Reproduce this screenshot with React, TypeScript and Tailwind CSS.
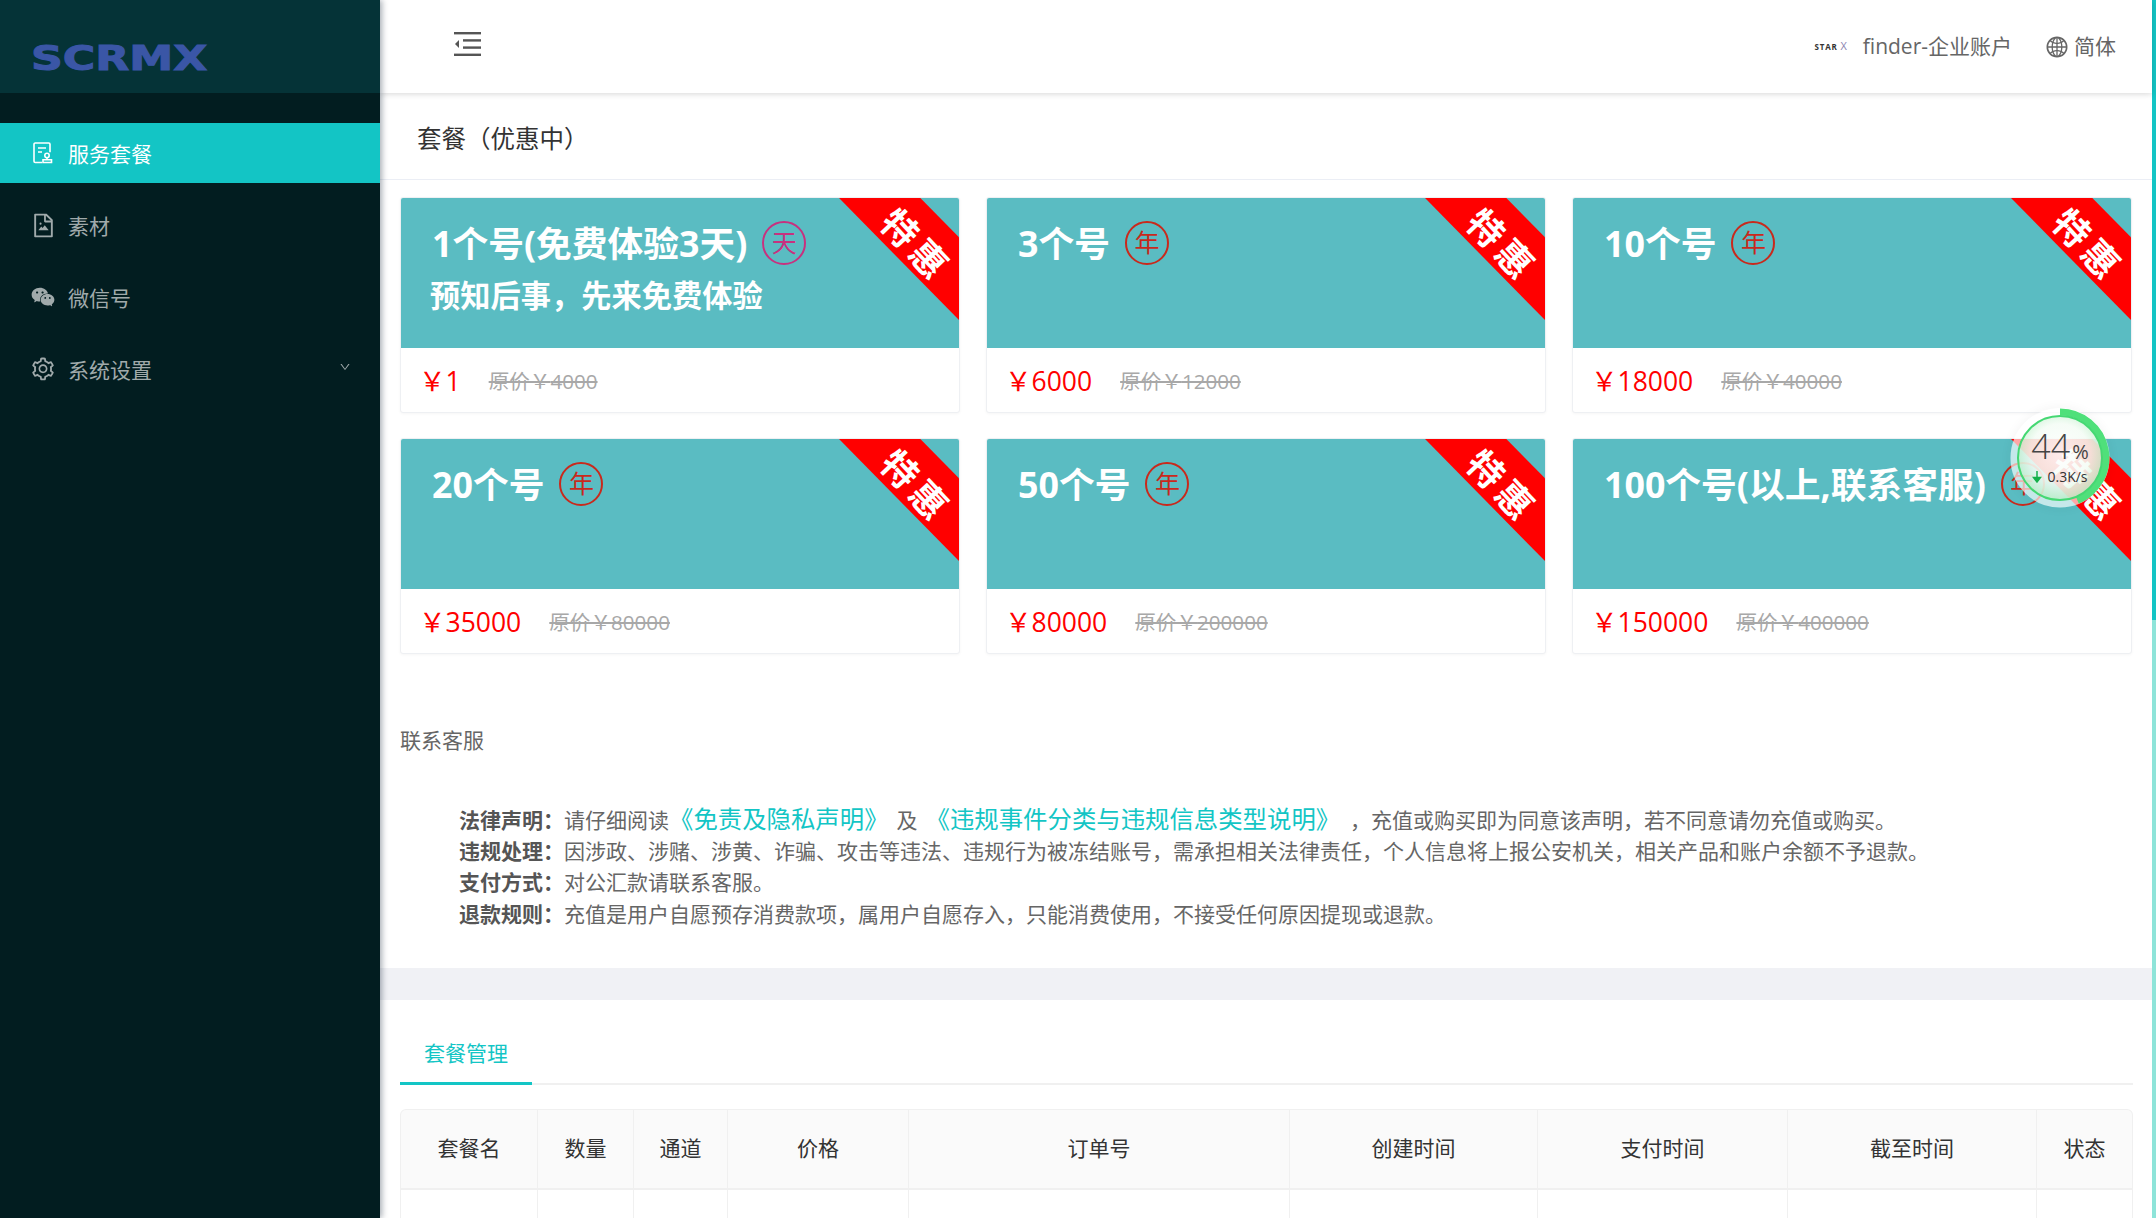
import { AiFillWechat, AiOutlineDown, AiOutlineFileImage, AiOutlineGlobal, AiOutlineSetting } from 'react-icons/ai';

const packages = [
  { title: '1个号(免费体验3天)', unit: '天', sub: '预知后事，先来免费体验', price: '1', old: '4000' },
  { title: '3个号', unit: '年', price: '6000', old: '12000' },
  { title: '10个号', unit: '年', price: '18000', old: '40000' },
  { title: '20个号', unit: '年', price: '35000', old: '80000' },
  { title: '50个号', unit: '年', price: '80000', old: '200000' },
  { title: '100个号(以上,联系客服)', unit: '年', price: '150000', old: '400000' },
];

const columns = [
  { name: '套餐名', width: 'w-[138px]' },
  { name: '数量', width: 'w-[96px]' },
  { name: '通道', width: 'w-[94px]' },
  { name: '价格', width: 'w-[181px]' },
  { name: '订单号', width: 'w-[381px]' },
  { name: '创建时间', width: 'w-[248px]' },
  { name: '支付时间', width: 'w-[250px]' },
  { name: '截至时间', width: 'w-[249px]' },
  { name: '状态', width: 'w-[96px]' },
];

const ServiceIcon = () => (
  <svg width="20" height="22" viewBox="0 0 20 22" fill="none" stroke="currentColor" strokeWidth="1.6">
    <path d="M9 20.5H2.2a1.2 1.2 0 0 1-1.2-1.2V2.2A1.2 1.2 0 0 1 2.2 1h13.6A1.2 1.2 0 0 1 17 2.2v8" />
    <path d="M5 6h8M5 10h4" />
    <circle cx="14" cy="13.5" r="2.2" />
    <path d="M14 15.7v2M10 20.5v-2.8h8.5v2.8z" />
  </svg>
);

const MenuItem = ({ icon, label, active, arrow }: { icon: React.ReactNode; label: string; active?: boolean; arrow?: boolean }) => (
  <div className={`mb-3 flex h-[60px] items-center pl-[33px] text-[21px] ${active ? 'bg-[#13c5c5] text-white' : 'text-[#a0aaab]'}`}>
    <span className="flex w-[20px] justify-center">{icon}</span>
    <span className="ml-[15px] pt-[3px]">{label}</span>
    {arrow && <AiOutlineDown className="ml-auto mr-[29px] mb-1" size={12} />}
  </div>
);

const PackageCard = ({ item }: { item: (typeof packages)[number] }) => (
  <div className="h-[216px] overflow-hidden rounded-[3px] border border-[#eef0f3] bg-white shadow-[0_1px_3px_rgba(0,0,0,0.04)]">
    <div className="relative h-[150px] overflow-hidden bg-[#5abcc2] pl-[31px] pt-[22px] text-white">
      <div className="flex items-center">
        <span className="text-[35.75px] font-bold leading-[46px] whitespace-nowrap">{item.title}</span>
        <span className={`ml-[15px] flex h-[44px] w-[44px] shrink-0 items-center justify-center rounded-full border-2 text-[25px] ${item.unit === '天' ? 'border-[#c8317f] text-[#c8317f]' : 'border-[#c9291c] text-[#c9291c]'}`}>
          {item.unit}
        </span>
      </div>
      {item.sub && <div className="mt-[10px] -ml-[2px] text-[30.25px] font-bold leading-[40px]">{item.sub}</div>}
      <div className="absolute -right-[60px] top-[11px] h-[58px] w-[200px] rotate-[45.5deg] bg-[#ff0000]" />
      <div className="absolute right-px top-[30px] w-[84px] rotate-[47deg] text-center text-[36px] font-bold leading-none tracking-[6px] whitespace-nowrap">特惠</div>
    </div>
    <div className="flex h-[64px] items-center pl-[18px] pt-[3px]">
      <span className="text-[26.5px] text-[#ff0000]">￥{item.price}</span>
      <span className="ml-[28px] text-[20.6px] text-[#a8a8a8] line-through">原价￥{item.old}</span>
    </div>
  </div>
);

const SpeedBall = () => (
  <div className="absolute right-[46px] top-[408px] h-[100px] w-[100px] rounded-full shadow-[0_0_12px_rgba(0,0,0,0.05)]">
    <svg width="100" height="100" viewBox="0 0 100 100" className="absolute inset-0">
      <defs>
        <radialGradient id="ballFill" cx="50%" cy="45%" r="55%">
          <stop offset="0%" stopColor="#ffffff" stopOpacity="0.92" />
          <stop offset="65%" stopColor="#f4fcf5" stopOpacity="0.88" />
          <stop offset="100%" stopColor="#c3f0cd" stopOpacity="0.92" />
        </radialGradient>
      </defs>
      <circle cx="50" cy="50" r="46" fill="none" stroke="#ffffff" strokeOpacity="0.65" strokeWidth="7" />
      <path d="M50 4 A46 46 0 0 1 67.5 92.5" fill="none" stroke="#4fe07a" strokeWidth="7" />
      <circle cx="50" cy="50" r="42" fill="url(#ballFill)" stroke="#45d873" strokeWidth="2" />
    </svg>
    <div className="absolute inset-0 flex flex-col items-center pt-[19px]">
      <div className="flex items-baseline leading-none text-[#444]">
        <span className="text-[34px] font-light leading-[38px]">44</span>
        <span className="ml-[2px] text-[20px]">%</span>
      </div>
      <div className="mt-[3px] flex items-center text-[14px] leading-[18px] text-[#333]">
        <svg width="10" height="12" viewBox="0 0 10 12" className="mr-[5px]">
          <path d="M5 0v7M1.5 6.5L5 11l3.5-4.5z" fill="#16b04a" stroke="#16b04a" strokeWidth="1.5" />
        </svg>
        0.3K/s
      </div>
    </div>
  </div>
);

export default function App() {
  return (
    <div className="relative flex h-screen w-full overflow-hidden bg-white font-['Open_Sans','Noto_Sans_CJK_SC',sans-serif]">
      <aside className="z-20 w-[380px] shrink-0 bg-[#021d20] shadow-[2px_0_6px_rgba(0,21,41,0.35)]">
        <div className="flex h-[93px] items-center overflow-hidden bg-[#053337] pl-[31px] pt-[22px]">
          <span className="origin-left scale-x-[1.3] font-['DejaVu_Sans',sans-serif] text-[34px] font-bold leading-none text-[#3a56a6] [-webkit-text-stroke:1px_#3a56a6]">
            SCRMX
          </span>
        </div>
        <nav className="pt-[30px]">
          <MenuItem active icon={<ServiceIcon />} label="服务套餐" />
          <MenuItem icon={<AiOutlineFileImage className="shrink-0" size={27} />} label="素材" />
          <MenuItem icon={<AiFillWechat className="shrink-0" size={26} />} label="微信号" />
          <MenuItem arrow icon={<AiOutlineSetting className="shrink-0" size={26} />} label="系统设置" />
        </nav>
      </aside>

      <main className="flex min-w-0 flex-1 flex-col">
        <header className="z-10 flex h-[93px] shrink-0 items-center bg-white pl-[74px] pr-[36px] shadow-[0_1px_6px_rgba(0,0,0,0.16)]">
          <svg width="27" height="24" viewBox="0 0 27 24" fill="#555" className="-mt-[6px]">
            <rect width="27" height="2.4" />
            <rect x="9" y="7.2" width="18" height="2.4" />
            <rect x="9" y="14.4" width="18" height="2.4" />
            <rect y="21.6" width="27" height="2.4" />
            <path d="M5 8v8l-4-4z" />
          </svg>
          <div className="ml-auto flex items-center text-[21px] text-[#666]">
            <span className="flex items-center text-[8px] font-bold tracking-[0.8px] text-[#333]">
              STAR <span className="ml-[3px] text-[11px] font-normal text-[#8a84b0]">X</span>
            </span>
            <span className="ml-[15px]">finder-企业账户</span>
            <AiOutlineGlobal className="ml-[33px]" size={24} />
            <span className="ml-[5px]">简体</span>
          </div>
        </header>

        <section className="px-[20px] pb-[38px]">
          <div className="-mx-[20px] flex h-[87px] items-center border-b border-[#ebeef5] pl-[37px] pt-[6px] text-[24.5px] text-[#333]">套餐（优惠中）</div>
          <div className="mt-[17px] grid grid-cols-3 gap-x-[26px] gap-y-[25px]">
            {packages.map((item) => (
              <PackageCard key={item.title} item={item} />
            ))}
          </div>
          <div className="mt-[72px] text-[21px] leading-[28px] text-[#666]">联系客服</div>
          <div className="ml-[59px] mt-[49px] text-[21px] leading-[31.2px] text-[#666]">
            <p>
              <b className="text-[#555]">法律声明：</b>请仔细阅读
              <span className="text-[24.4px] text-[#13c5c5]">《免责及隐私声明》</span>
              <span className="mx-[8px]">及</span>
              <span className="text-[24.4px] text-[#13c5c5]">《违规事件分类与违规信息类型说明》</span>
              <span className="ml-[22px]">，充值或购买即为同意该声明，若不同意请勿充值或购买。</span>
            </p>
            <p>
              <b className="text-[#555]">违规处理：</b>因涉政、涉赌、涉黄、诈骗、攻击等违法、违规行为被冻结账号，需承担相关法律责任，个人信息将上报公安机关，相关产品和账户余额不予退款。
            </p>
            <p>
              <b className="text-[#555]">支付方式：</b>对公汇款请联系客服。
            </p>
            <p>
              <b className="text-[#555]">退款规则：</b>充值是用户自愿预存消费款项，属用户自愿存入，只能消费使用，不接受任何原因提现或退款。
            </p>
          </div>
        </section>

        <div className="h-[32px] shrink-0 bg-[#f0f1f5]" />

        <section className="pl-[20px] pr-[19px]">
          <div className="flex h-[85px] items-end border-b-[2px] border-[#f0f0f0]">
            <div className="-mb-[2px] flex h-[60px] w-[132px] items-center justify-center border-b-[3px] border-[#13c5c5] text-[21px] text-[#13c5c5]">套餐管理</div>
          </div>
          <table className="mt-[24px] w-full table-fixed border-separate border-spacing-0 text-[21px] text-[#333]">
            <thead>
              <tr>
                {columns.map((col, i) => (
                  <th
                    key={col.name}
                    className={`h-[81px] border-b-[2px] border-r border-t border-[#f0f0f0] bg-[#fafafa] font-normal ${col.width} ${i === 0 ? 'rounded-tl-[6px] border-l' : ''} ${i === columns.length - 1 ? 'rounded-tr-[6px]' : ''}`}
                  >
                    {col.name}
                  </th>
                ))}
              </tr>
            </thead>
            <tbody>
              <tr>
                {columns.map((col, i) => (
                  <td key={col.name} className={`h-[60px] border-r border-[#f0f0f0] ${i === 0 ? 'border-l' : ''}`} />
                ))}
              </tr>
            </tbody>
          </table>
        </section>
      </main>

      <div className="flex w-[4px] shrink-0 flex-col bg-[#8ee4d9]">
        <div className="h-[620px] bg-[#13c5c5]" />
      </div>

      <SpeedBall />
    </div>
  );
}
